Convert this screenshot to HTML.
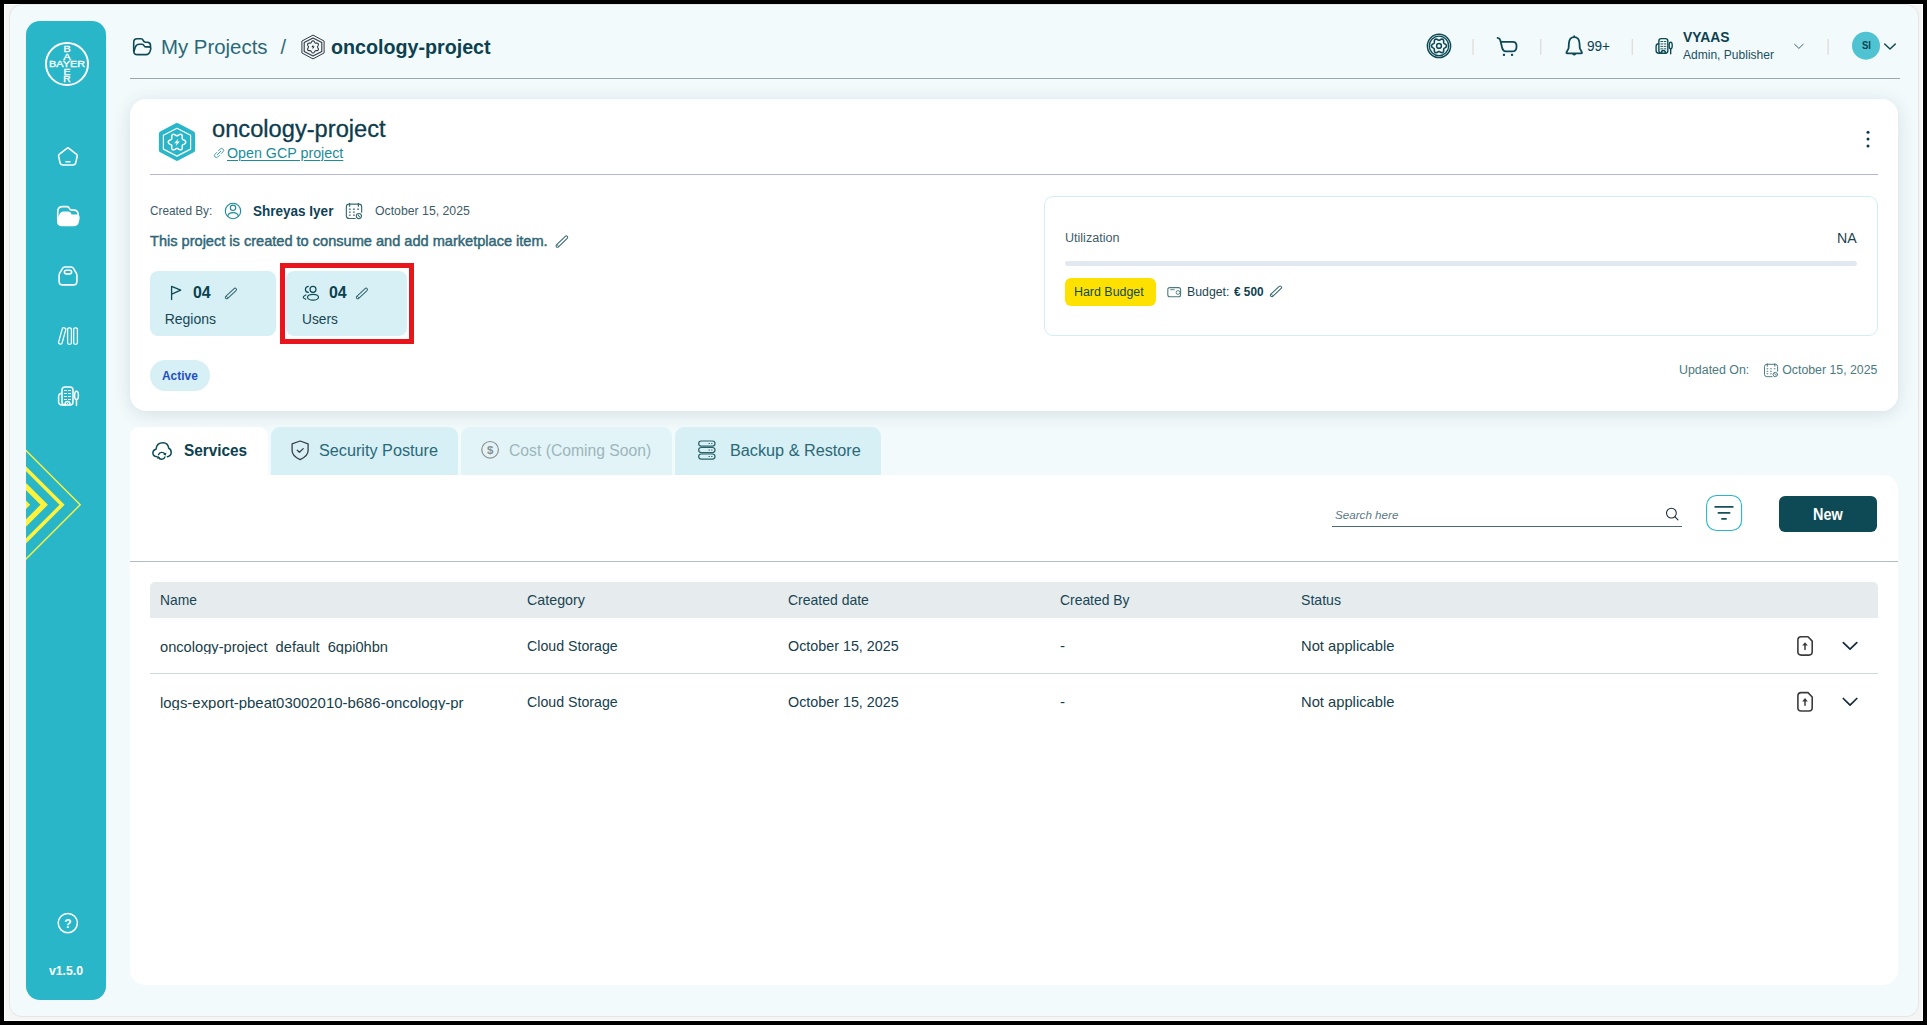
<!DOCTYPE html>
<html lang="en"><head><meta charset="utf-8"><title>oncology-project</title><style>
*{margin:0;padding:0;box-sizing:border-box}
html,body{width:1927px;height:1025px;overflow:hidden;background:#000}
body{position:relative;font-family:"Liberation Sans",sans-serif;}
.b{position:absolute;display:block}
.t{position:absolute;display:block;white-space:nowrap;transform-origin:0 0}
svg{overflow:visible}
</style></head><body>
<div class="b" style="left:4px;top:4px;width:1919px;height:1017px;background:#f5f5f5;border:1px solid #fff;"></div>
<div class="b" style="left:9.6px;top:5.2px;width:1908.2px;height:1011.2px;background:#f2fafc;border-radius:12px;box-shadow:0 0 0 1px #e6e6e6;"></div>
<div class="b" style="left:26px;top:20.5px;width:80px;height:979.5px;background:#29b6c9;border-radius:14px;"></div>
<svg class="b" style="left:0px;top:0px;" width="140" height="110" viewBox="0 0 140 110" fill="none"><circle cx="67" cy="64" r="21" stroke="#fff" stroke-width="2"/><g fill="#fff" font-family="Liberation Sans, sans-serif" font-weight="400" font-size="8.4" text-anchor="middle" stroke="#fff" stroke-width="0.3"><text x="67" y="67.2" textLength="36" lengthAdjust="spacingAndGlyphs">BAYER</text><text x="67" y="52.3" textLength="7.2" lengthAdjust="spacingAndGlyphs">B</text><text x="67" y="60" textLength="7.6" lengthAdjust="spacingAndGlyphs">A</text><text x="67" y="74.6" textLength="7" lengthAdjust="spacingAndGlyphs">E</text><text x="67" y="82.2" textLength="7.4" lengthAdjust="spacingAndGlyphs">R</text></g></svg>
<svg class="b" style="left:0px;top:0px;" width="140" height="420" viewBox="0 0 140 420" fill="none"><g stroke="#fff" stroke-width="1.6" stroke-linejoin="round" stroke-linecap="round"><path d="M66.9,148.3 Q67.9,147.5 68.9,148.3 L76.6,154.3 Q77.4,155 77.2,156.1 L75.8,162.6 Q75.3,165 72.8,165 L63,165 Q60.5,165 60,162.6 L58.6,156.1 Q58.4,155 59.2,154.3 Z"/><path d="M66,161.8 L69.9,161.8"/></g><g stroke="#fff" stroke-width="1.6" stroke-linejoin="round" stroke-linecap="round"><path d="M57.75,219 L57.75,211.6 Q57.75,206.6 62.5,206.6 L66.8,206.6 Q68.6,206.6 69.3,208.3 Q70,210.1 71.8,210.1 L73.8,210.1 Q78.2,210.1 78.2,215"/><path fill="#fff" d="M59.6,216.5 Q60.3,212.4 64,212.4 L68,212.4 Q70.1,212.4 70.5,213.9 Q70.9,215.4 72.5,215.4 L77,215.4 Q79.2,215.4 78.8,218.5 L78.1,222 Q77.3,225.5 73.5,225.5 L62,225.5 Q57.9,225.5 57.8,221.5 L57.75,219 Z"/></g><g stroke="#fff" stroke-width="1.6" stroke-linejoin="round"><path d="M64.8,267 L71.2,267 Q72.7,267 73.5,268.4 L76.4,273.3 Q76.9,274.2 76.9,275.3 L76.9,281.2 Q76.9,284.9 73.2,284.9 L62.8,284.9 Q59.1,284.9 59.1,281.2 L59.1,275.3 Q59.1,274.2 59.6,273.3 L62.5,268.4 Q63.3,267 64.8,267 Z"/><rect x="64.4" y="270.2" width="7.2" height="3.7" rx="1.85"/></g><g stroke="#fff" stroke-width="1.3"><rect x="73.7" y="327.8" width="3.7" height="16.5" rx="1.5"/><rect x="67.6" y="327.8" width="3.8" height="16.5" rx="1.5"/><rect x="60.4" y="327.6" width="3.6" height="16.6" rx="1.3" transform="rotate(15.5 62.2 335.9)"/></g><g stroke="#fff" stroke-width="1.5" stroke-linecap="round" stroke-linejoin="round"><rect x="62" y="387" width="11" height="17.9" rx="3"/><path d="M61.6,393.2 Q58.6,393.5 58.6,396.6 L58.6,401.5 Q58.6,404.9 62,404.9 L66,404.9"/><path d="M65,404.4 Q65,401.6 67.5,401.6 Q70,401.6 70,404.4"/><ellipse cx="76.5" cy="395.4" rx="1.9" ry="4.1"/><path d="M76.5,399.6 L76.5,405.6"/></g><g stroke="#fff" stroke-width="1" stroke-linecap="round"><path d="M64.4,390.5 L66.6,390.5"/><path d="M68.45,390.5 L70.64999999999999,390.5"/><path d="M64.4,393.5 L66.6,393.5"/><path d="M68.45,393.5 L70.64999999999999,393.5"/><path d="M64.4,396.5 L66.6,396.5"/><path d="M68.45,396.5 L70.64999999999999,396.5"/><path d="M64.4,399.5 L66.6,399.5"/><path d="M68.45,399.5 L70.64999999999999,399.5"/></g><circle cx="67.5" cy="403.5" r="0.6" fill="#fff"/></svg>
<svg class="b" style="left:0px;top:0px;" width="140" height="600" viewBox="0 0 140 600" fill="none"><g fill="#fff23a"><path d="M26,449.6 L81.2,504.8 L26,560.0 L26,558.0 L79.2,504.8 L26,451.6 Z"/><path d="M26,466.20000000000005 L64.6,504.8 L26,543.4 L26,538.3 L59.49999999999999,504.8 L26,471.30000000000007 Z"/><path d="M26,482.90000000000003 L47.9,504.8 L26,526.7 L26,519.3000000000001 L40.5,504.8 L26,490.3 Z"/><path d="M26,500.6 L30.2,504.8 L26,509 Z"/></g></svg>
<svg class="b" style="left:0px;top:0px;" width="140" height="1000" viewBox="0 0 140 1000" fill="none"><circle cx="67.8" cy="923.1" r="9.6" stroke="#fff" stroke-width="1.5"/><text x="67.8" y="927.5" fill="#fff" font-family="Liberation Sans, sans-serif" font-size="12" font-weight="700" text-anchor="middle">?</text></svg>
<span class="t" style="left:48.70px;top:965.00px;font-size:12px;line-height:12px;color:#fff;font-weight:700;transform:scaleX(1.0191);">v1.5.0</span>
<svg class="b" style="left:0px;top:0px;" width="200" height="80" viewBox="0 0 200 80" fill="none"><g stroke="#0e4a55" stroke-width="1.6" stroke-linecap="round" stroke-linejoin="round"><path d="M133.7,51.5 L133.7,42.4 Q133.7,38.8 137.2,38.8 L140.9,38.8 Q142.6,38.8 143.2,40.4 Q143.9,42.3 145.6,42.3 L147.3,42.3 Q150.5,42.3 150.5,45.6 L150.5,47"/><path d="M133.9,51.6 L135.3,47.2 Q136.2,44.2 139.2,44.2 L142,44.2 Q143.4,44.2 143.9,45.5 Q144.4,46.9 145.8,46.9 L148.8,46.9 Q151.3,46.9 150.7,49.2 L149.8,52 Q148.9,54.6 146.2,54.6 L137.4,54.6 Q133.8,54.6 133.9,51.6 Z"/></g></svg>
<span class="t" style="left:160.60px;top:37.00px;font-size:20px;line-height:20px;color:#2b6878;transform:scaleX(1.0195);">My Projects</span>
<span class="t" style="left:280.40px;top:37.00px;font-size:20px;line-height:20px;color:#2b6878;">/</span>
<svg class="b" style="left:0px;top:0px;" width="340" height="80" viewBox="0 0 340 80" fill="none"><g stroke="#343843" stroke-width="1" stroke-linejoin="round"><path d="M313.00,35.10 L324.10,41.05 L324.10,52.95 L313.00,58.90 L301.90,52.95 L301.90,41.05 Z"/><path d="M313.00,38.05 L321.80,42.52 L321.80,51.48 L313.00,55.95 L304.20,51.48 L304.20,42.52 Z" stroke-width="1.1"/><path d="M313.00,40.80 L313.39,40.87 L313.77,41.08 L314.09,41.40 L314.37,41.78 L314.61,42.17 L314.81,42.53 L315.02,42.81 L315.25,43.00 L315.53,43.11 L315.88,43.14 L316.29,43.15 L316.75,43.15 L317.21,43.20 L317.65,43.33 L318.02,43.54 L318.28,43.85 L318.42,44.23 L318.42,44.66 L318.31,45.10 L318.12,45.53 L317.90,45.93 L317.69,46.28 L317.55,46.60 L317.50,46.90 L317.55,47.20 L317.69,47.52 L317.90,47.87 L318.12,48.27 L318.31,48.70 L318.42,49.14 L318.42,49.57 L318.28,49.95 L318.02,50.26 L317.65,50.47 L317.21,50.60 L316.75,50.65 L316.29,50.65 L315.88,50.66 L315.53,50.69 L315.25,50.80 L315.02,50.99 L314.81,51.27 L314.61,51.63 L314.37,52.02 L314.09,52.40 L313.77,52.72 L313.39,52.93 L313.00,53.00 L312.61,52.93 L312.23,52.72 L311.91,52.40 L311.63,52.02 L311.39,51.63 L311.19,51.27 L310.98,50.99 L310.75,50.80 L310.47,50.69 L310.12,50.66 L309.71,50.65 L309.25,50.65 L308.79,50.60 L308.35,50.47 L307.98,50.26 L307.72,49.95 L307.58,49.57 L307.58,49.14 L307.69,48.70 L307.88,48.27 L308.10,47.87 L308.31,47.52 L308.45,47.20 L308.50,46.90 L308.45,46.60 L308.31,46.28 L308.10,45.93 L307.88,45.53 L307.69,45.10 L307.58,44.66 L307.58,44.23 L307.72,43.85 L307.98,43.54 L308.35,43.33 L308.79,43.20 L309.25,43.15 L309.71,43.15 L310.12,43.14 L310.47,43.11 L310.75,43.00 L310.98,42.81 L311.19,42.53 L311.39,42.17 L311.63,41.78 L311.91,41.40 L312.23,41.08 L312.61,40.87 Z" stroke-width="1.1"/></g><path d="M313.4,44.6 L311.4,47.3 L312.9,47.3 L312.5,49.4 L314.6,46.5 L313.1,46.5 Z" fill="#15171c"/></svg>
<span class="t" style="left:330.90px;top:37.00px;font-size:20px;line-height:20px;color:#0c4150;font-weight:700;transform:scaleX(0.9838);">oncology-project</span>
<div class="b" style="left:130px;top:78px;width:1770px;height:1px;background:#9ba7ab;"></div>
<svg class="b" style="left:0px;top:0px;" width="1927" height="80" viewBox="0 0 1927 80" fill="none"><g stroke="#0e4a55"><circle cx="1439" cy="45.9" r="11.6" stroke-width="1.5"/><circle cx="1439" cy="45.9" r="9.7" stroke-width="1.3"/><path d="M1439.00,40.30 L1439.37,40.24 L1439.77,40.06 L1440.21,39.80 L1440.71,39.52 L1441.24,39.29 L1441.80,39.15 L1442.33,39.15 L1442.80,39.32 L1443.18,39.64 L1443.45,40.10 L1443.60,40.65 L1443.67,41.23 L1443.67,41.80 L1443.68,42.31 L1443.72,42.75 L1443.85,43.10 L1444.09,43.39 L1444.44,43.64 L1444.89,43.90 L1445.38,44.19 L1445.85,44.54 L1446.24,44.95 L1446.51,45.41 L1446.60,45.90 L1446.51,46.39 L1446.24,46.85 L1445.85,47.26 L1445.38,47.61 L1444.89,47.90 L1444.44,48.16 L1444.09,48.41 L1443.85,48.70 L1443.72,49.05 L1443.68,49.49 L1443.67,50.00 L1443.67,50.57 L1443.60,51.15 L1443.45,51.70 L1443.18,52.16 L1442.80,52.48 L1442.33,52.65 L1441.80,52.65 L1441.24,52.51 L1440.71,52.28 L1440.21,52.00 L1439.77,51.74 L1439.37,51.56 L1439.00,51.50 L1438.63,51.56 L1438.23,51.74 L1437.79,52.00 L1437.29,52.28 L1436.76,52.51 L1436.20,52.65 L1435.67,52.65 L1435.20,52.48 L1434.82,52.16 L1434.55,51.70 L1434.40,51.15 L1434.33,50.57 L1434.33,50.00 L1434.32,49.49 L1434.28,49.05 L1434.15,48.70 L1433.91,48.41 L1433.56,48.16 L1433.11,47.90 L1432.62,47.61 L1432.15,47.26 L1431.76,46.85 L1431.49,46.39 L1431.40,45.90 L1431.49,45.41 L1431.76,44.95 L1432.15,44.54 L1432.62,44.19 L1433.11,43.90 L1433.56,43.64 L1433.91,43.39 L1434.15,43.10 L1434.28,42.75 L1434.32,42.31 L1434.33,41.80 L1434.33,41.23 L1434.40,40.65 L1434.55,40.10 L1434.82,39.64 L1435.20,39.32 L1435.67,39.15 L1436.20,39.15 L1436.76,39.29 L1437.29,39.52 L1437.79,39.80 L1438.23,40.06 L1438.63,40.24 Z" stroke-width="1.6" stroke-linejoin="round"/><circle cx="1439" cy="45.9" r="2.4" stroke-width="1.5"/></g><rect x="1472.3" y="39" width="1.4" height="15.8" fill="#e3dcdc"/><rect x="1540" y="39" width="1.4" height="15.8" fill="#e3dcdc"/><rect x="1631.6" y="39" width="1.4" height="15.8" fill="#e3dcdc"/><rect x="1827.4" y="39" width="1.4" height="15.8" fill="#e3dcdc"/><g stroke="#0e4a55" stroke-width="1.8" stroke-linecap="round" stroke-linejoin="round"><path d="M1497.6,37.9 Q1499.8,38.2 1500.3,40.2 L1502.2,48 Q1503,51.4 1506,51.4 L1512,51.4 Q1516.5,51.4 1516.5,46.9 L1516.5,45.6 Q1516.5,41.8 1512.8,41.8 L1500.9,41.8"/></g><rect x="1502.9" y="53.8" width="2.1" height="2.1" fill="#0e4a55"/><rect x="1511" y="53.8" width="2.1" height="2.1" fill="#0e4a55"/><g stroke="#0e4a55" stroke-width="1.8" stroke-linejoin="round" stroke-linecap="round"><path d="M1567.2,53.4 Q1566,53.4 1566.6,52.2 L1568.3,48.9 Q1568.7,48 1568.7,47 L1568.9,43.3 Q1569.3,37.2 1574.2,37.2 Q1579.1,37.2 1579.5,43.3 L1579.7,47 Q1579.7,48 1580.1,48.9 L1581.8,52.2 Q1582.4,53.4 1581.2,53.4 Z"/><path d="M1574.2,36.2 L1574.2,37"/></g><path d="M1572,54 Q1574.2,57 1576.4,54 Z" fill="#0e4a55"/><g transform="translate(1655.2,38) scale(0.815) translate(-57.5,-386.2)"><g stroke="#0e4a55" stroke-width="1.7" stroke-linecap="round" stroke-linejoin="round"><rect x="62" y="387" width="11" height="17.9" rx="3"/><path d="M61.6,393.2 Q58.6,393.5 58.6,396.6 L58.6,401.5 Q58.6,404.9 62,404.9 L66,404.9"/><path d="M65,404.4 Q65,401.6 67.5,401.6 Q70,401.6 70,404.4"/><ellipse cx="76.5" cy="395.4" rx="1.9" ry="4.1"/><path d="M76.5,399.6 L76.5,405.6"/></g><g stroke="#0e4a55" stroke-width="1.1" stroke-linecap="round"><path d="M64.4,390.5 L66.6,390.5"/><path d="M68.45,390.5 L70.64999999999999,390.5"/><path d="M64.4,393.5 L66.6,393.5"/><path d="M68.45,393.5 L70.64999999999999,393.5"/><path d="M64.4,396.5 L66.6,396.5"/><path d="M68.45,396.5 L70.64999999999999,396.5"/><path d="M64.4,399.5 L66.6,399.5"/><path d="M68.45,399.5 L70.64999999999999,399.5"/></g></g><g stroke="#0e4a55" stroke-linecap="round" stroke-linejoin="round"><path d="M1794.6,44.3 L1798.9,48.4 L1803.2,44.3" stroke-width="1" stroke="#3a6a72"/><path d="M1884.7,44 L1890,49 L1895.3,44" stroke-width="1.5"/></g><circle cx="1866" cy="45.7" r="14" fill="#50c3d3"/></svg>
<span class="t" style="left:1586.90px;top:39.00px;font-size:14px;line-height:14px;color:#0c4150;transform:scaleX(0.9685);">99+</span>
<span class="t" style="left:1682.50px;top:30.00px;font-size:14px;line-height:14px;color:#0c4150;font-weight:700;transform:scaleX(0.9904);">VYAAS</span>
<span class="t" style="left:1682.60px;top:48.75px;font-size:12.5px;line-height:12.5px;color:#1d4f5e;transform:scaleX(0.9631);">Admin, Publisher</span>
<span class="t" style="left:1861.50px;top:40.50px;font-size:10px;line-height:10px;color:#0c4150;font-weight:700;transform:scaleX(0.9526);">SI</span>
<div class="b" style="left:130px;top:99px;width:1768px;height:312px;background:#fff;border-radius:16px;box-shadow:0 3px 18px rgba(40,60,70,0.14);"></div>
<svg class="b" style="left:0px;top:0px;" width="1927" height="420" viewBox="0 0 1927 420" fill="none"><path d="M177.00,125.40 L192.60,133.65 L192.60,150.15 L177.00,158.40 L161.40,150.15 L161.40,133.65 Z" fill="#29b6c9" stroke="#29b6c9" stroke-width="5" stroke-linejoin="round"/><path d="M177.00,128.30 L190.60,135.25 L190.60,149.15 L177.00,156.10 L163.40,149.15 L163.40,135.25 Z" stroke="#fff" stroke-width="1.2" stroke-linejoin="round"/><path d="M177.00,135.85 L177.41,135.77 L177.86,135.54 L178.37,135.21 L178.94,134.86 L179.56,134.55 L180.21,134.35 L180.83,134.34 L181.38,134.52 L181.81,134.90 L182.10,135.45 L182.26,136.10 L182.30,136.80 L182.28,137.47 L182.25,138.07 L182.28,138.57 L182.41,138.97 L182.69,139.29 L183.11,139.57 L183.65,139.84 L184.24,140.16 L184.83,140.54 L185.31,141.01 L185.64,141.53 L185.75,142.10 L185.64,142.67 L185.31,143.19 L184.83,143.66 L184.24,144.04 L183.65,144.36 L183.11,144.63 L182.69,144.91 L182.41,145.22 L182.28,145.63 L182.25,146.13 L182.28,146.73 L182.30,147.40 L182.26,148.10 L182.10,148.75 L181.81,149.30 L181.38,149.68 L180.83,149.86 L180.21,149.85 L179.56,149.65 L178.94,149.34 L178.37,148.99 L177.86,148.66 L177.41,148.43 L177.00,148.35 L176.59,148.43 L176.14,148.66 L175.63,148.99 L175.06,149.34 L174.44,149.65 L173.79,149.85 L173.17,149.86 L172.62,149.68 L172.19,149.30 L171.90,148.75 L171.74,148.10 L171.70,147.40 L171.72,146.73 L171.75,146.13 L171.72,145.63 L171.59,145.22 L171.31,144.91 L170.89,144.63 L170.35,144.36 L169.76,144.04 L169.17,143.66 L168.69,143.19 L168.36,142.67 L168.25,142.10 L168.36,141.53 L168.69,141.01 L169.17,140.54 L169.76,140.16 L170.35,139.84 L170.89,139.57 L171.31,139.29 L171.59,138.97 L171.72,138.57 L171.75,138.07 L171.72,137.47 L171.70,136.80 L171.74,136.10 L171.90,135.45 L172.19,134.90 L172.62,134.52 L173.17,134.34 L173.79,134.35 L174.44,134.55 L175.06,134.86 L175.63,135.21 L176.14,135.54 L176.59,135.77 Z" stroke="#fff" stroke-width="1.5" stroke-linejoin="round"/><path d="M178.4,138.5 L174.2,143.2 L176.8,143.2 L175.6,146.3 L179.8,141.4 L177.2,141.4 Z" fill="#fff"/><g transform="translate(219,153) rotate(-45)" stroke="#1b8c99" stroke-width="0.9" stroke-linecap="round" opacity="0.85"><path d="M-1.2,-2 L-3.6,-2 Q-5.6,-2 -5.6,0 Q-5.6,2 -3.6,2 L-1.2,2"/><path d="M1.2,-2 L3.6,-2 Q5.6,-2 5.6,0 Q5.6,2 3.6,2 L1.2,2"/><path d="M-2.4,0 L2.4,0"/></g><circle cx="1868" cy="132.2" r="1.5" fill="#0c3a4a"/><circle cx="1868" cy="139" r="1.5" fill="#0c3a4a"/><circle cx="1868" cy="145.9" r="1.5" fill="#0c3a4a"/><g stroke="#1b8c99" stroke-width="1.1"><circle cx="233" cy="211" r="7.7"/><circle cx="233" cy="207.8" r="2.7"/><path d="M227.6,216.3 Q228.4,212.6 233,212.6 Q237.6,212.6 238.4,216.3"/></g><g transform="translate(345.8,203.3) scale(1.0)" stroke="#3a6a72" stroke-width="1.15" stroke-linecap="round"><path d="M9.4,15.2 L3.3,15.2 Q0.55,15.2 0.55,12.5 L0.55,3.5 Q0.55,0.8 3.3,0.8 L13.1,0.8 Q15.85,0.8 15.85,3.5 L15.85,8.9"/><path d="M3.8,0.2 L3.8,2.9 M12.6,0.2 L12.6,2.9" stroke-width="1.3"/><circle cx="13.1" cy="12.7" r="2.55"/><path d="M12.6,11.7 L12.9,12.9 L13.9,13.4" stroke-width="1"/><path d="M3.55,5.9 L4.45,5.9" stroke-width="1.25"/><path d="M7.6499999999999995,5.9 L8.549999999999999,5.9" stroke-width="1.25"/><path d="M11.850000000000001,5.9 L12.75,5.9" stroke-width="1.25"/><path d="M3.55,8.8 L4.45,8.8" stroke-width="1.25"/><path d="M3.55,11.8 L4.45,11.8" stroke-width="1.25"/><path d="M7.6499999999999995,8.8 L8.549999999999999,8.8" stroke-width="1.25"/><path d="M7.6499999999999995,11.8 L8.549999999999999,11.8" stroke-width="1.25"/></g><g transform="translate(1764,363.6) scale(0.86)" stroke="#4b7a80" stroke-width="1.15" stroke-linecap="round"><path d="M9.4,15.2 L3.3,15.2 Q0.55,15.2 0.55,12.5 L0.55,3.5 Q0.55,0.8 3.3,0.8 L13.1,0.8 Q15.85,0.8 15.85,3.5 L15.85,8.9"/><path d="M3.8,0.2 L3.8,2.9 M12.6,0.2 L12.6,2.9" stroke-width="1.3"/><circle cx="13.1" cy="12.7" r="2.55"/><path d="M12.6,11.7 L12.9,12.9 L13.9,13.4" stroke-width="1"/><path d="M3.55,5.9 L4.45,5.9" stroke-width="1.25"/><path d="M7.6499999999999995,5.9 L8.549999999999999,5.9" stroke-width="1.25"/><path d="M11.850000000000001,5.9 L12.75,5.9" stroke-width="1.25"/><path d="M3.55,8.8 L4.45,8.8" stroke-width="1.25"/><path d="M3.55,11.8 L4.45,11.8" stroke-width="1.25"/><path d="M7.6499999999999995,8.8 L8.549999999999999,8.8" stroke-width="1.25"/><path d="M7.6499999999999995,11.8 L8.549999999999999,11.8" stroke-width="1.25"/></g><g transform="translate(561.85,241.55) rotate(-44.02)"><rect x="-7.53" y="-1.40" width="15.06" height="2.80" rx="1.40" stroke="#33656f" stroke-width="1.0"/><path d="M-5.63,-1.40 L-5.63,1.40" stroke="#33656f" stroke-width="0.8"/></g></svg>
<span class="t" style="left:211.50px;top:117.50px;font-size:23px;line-height:23px;color:#0d3c4d;transform:scaleX(1.0287);-webkit-text-stroke:0.3px #0d3c4d;">oncology-project</span>
<span class="t" style="left:226.90px;top:146.00px;font-size:14px;line-height:14px;color:#1b8c99;transform:scaleX(1.0190);text-decoration:underline;text-decoration-thickness:1px;text-underline-offset:2px;">Open GCP project</span>
<div class="b" style="left:150px;top:174px;width:1728px;height:1px;background:#b4b6dc;"></div>
<span class="t" style="left:150.30px;top:203.75px;font-size:13.5px;line-height:13.5px;color:#3d5c69;transform:scaleX(0.8740);">Created By:</span>
<span class="t" style="left:253.10px;top:203.75px;font-size:14.5px;line-height:14.5px;color:#0e4256;font-weight:700;transform:scaleX(0.9321);">Shreyas Iyer</span>
<span class="t" style="left:374.50px;top:203.80px;font-size:13.4px;line-height:13.4px;color:#3d5c69;transform:scaleX(0.9165);">October 15, 2025</span>
<span class="t" style="left:150.30px;top:233.90px;font-size:14.2px;line-height:14.2px;color:#2f6778;transform:scaleX(1.0270);-webkit-text-stroke:0.45px #2f6778;">This project is created to consume and add marketplace item.</span>
<div class="b" style="left:150px;top:271px;width:126px;height:65px;background:#d6f0f5;border-radius:8px;"></div>
<div class="b" style="left:286.3px;top:271px;width:120.7px;height:65px;background:#d6f0f5;border-radius:8px;"></div>
<div class="b" style="left:279.7px;top:262.8px;width:134px;height:81.2px;border:5.8px solid #e8161c;"></div>
<svg class="b" style="left:0px;top:0px;" width="600" height="420" viewBox="0 0 600 420" fill="none"><g stroke="#0d4a54" stroke-width="1.3" stroke-linejoin="round" stroke-linecap="round"><path d="M171.6,299.6 L171.6,286.4 L180.7,290.2 L171.8,294.1"/></g><g stroke="#0d4a54" stroke-width="1.2" stroke-linecap="round"><circle cx="313" cy="289.3" r="3"/><ellipse cx="313" cy="297.2" rx="5.5" ry="2.9"/><path d="M308.3,286.4 Q305.4,286.9 305.4,289.4 Q305.4,291.9 308.3,292.4"/><path d="M305.8,295 Q303.2,296.4 303.2,297.3 Q303.2,298.3 305.8,299.3"/></g><g transform="translate(230.90,293.45) rotate(-43.19)"><rect x="-7.11" y="-1.40" width="14.22" height="2.80" rx="1.40" stroke="#33656f" stroke-width="1.0"/><path d="M-5.21,-1.40 L-5.21,1.40" stroke="#33656f" stroke-width="0.8"/></g><g transform="translate(361.90,293.45) rotate(-43.19)"><rect x="-7.11" y="-1.40" width="14.22" height="2.80" rx="1.40" stroke="#33656f" stroke-width="1.0"/><path d="M-5.21,-1.40 L-5.21,1.40" stroke="#33656f" stroke-width="0.8"/></g></svg>
<span class="t" style="left:192.80px;top:284.50px;font-size:16px;line-height:16px;color:#0c4150;font-weight:700;transform:scaleX(0.9945);">04</span>
<span class="t" style="left:329.20px;top:284.50px;font-size:16px;line-height:16px;color:#0c4150;font-weight:700;transform:scaleX(0.9945);">04</span>
<span class="t" style="left:164.70px;top:312.00px;font-size:14px;line-height:14px;color:#1b4552;">Regions</span>
<span class="t" style="left:301.50px;top:312.00px;font-size:14px;line-height:14px;color:#1b4552;transform:scaleX(0.9792);">Users</span>
<div class="b" style="left:150px;top:360.2px;width:59.7px;height:30.8px;background:#d6f0f5;border-radius:16px;"></div>
<span class="t" style="left:162.30px;top:369.85px;font-size:12.3px;line-height:12.3px;color:#1f4fbf;font-weight:700;transform:scaleX(0.9697);">Active</span>
<div class="b" style="left:1044px;top:196px;width:834px;height:140px;border:1px solid #d3eef3;border-radius:9px;"></div>
<span class="t" style="left:1064.90px;top:231.75px;font-size:12.5px;line-height:12.5px;color:#3d5c69;transform:scaleX(1.0039);">Utilization</span>
<span class="t" style="left:1836.90px;top:231.00px;font-size:14px;line-height:14px;color:#1b4552;transform:scaleX(1.0129);">NA</span>
<div class="b" style="left:1065px;top:261px;width:792px;height:5px;background:#e2e8f1;border-radius:3px;"></div>
<div class="b" style="left:1065px;top:278.2px;width:91.1px;height:27.9px;background:#ffe100;border-radius:6px;"></div>
<span class="t" style="left:1074.20px;top:285.75px;font-size:12.5px;line-height:12.5px;color:#0f4a50;transform:scaleX(0.9931);">Hard Budget</span>
<svg class="b" style="left:0px;top:0px;" width="1927" height="420" viewBox="0 0 1927 420" fill="none"><g stroke="#4b7a80" stroke-width="1.1" stroke-linejoin="round"><rect x="1167.8" y="287.6" width="12.8" height="9.2" rx="2"/><path d="M1170.3,289.7 L1174.6,289.7" stroke-width="0.9"/><circle cx="1178" cy="292.5" r="1.9" stroke-width="0.9"/></g><g transform="translate(1276.00,291.35) rotate(-43.19)"><rect x="-7.11" y="-1.40" width="14.22" height="2.80" rx="1.40" stroke="#33656f" stroke-width="1.0"/><path d="M-5.21,-1.40 L-5.21,1.40" stroke="#33656f" stroke-width="0.8"/></g></svg>
<span class="t" style="left:1187.40px;top:285.75px;font-size:12.5px;line-height:12.5px;color:#1b4552;transform:scaleX(0.9840);">Budget:</span>
<span class="t" style="left:1233.80px;top:286.00px;font-size:12px;line-height:12px;color:#0c4150;font-weight:700;transform:scaleX(0.9824);">€ 500</span>
<span class="t" style="left:1679.20px;top:363.85px;font-size:12.3px;line-height:12.3px;color:#4b7a80;transform:scaleX(1.0079);">Updated On:</span>
<span class="t" style="left:1782.30px;top:363.85px;font-size:12.3px;line-height:12.3px;color:#4b7a80;">October 15, 2025</span>
<div class="b" style="left:130px;top:427px;width:137.5px;height:49px;background:#fff;border-radius:9px 9px 0 0;"></div>
<div class="b" style="left:271px;top:427px;width:187px;height:48px;background:#d6f0f5;border-radius:9px 9px 0 0;"></div>
<div class="b" style="left:461.2px;top:427px;width:210.5px;height:48px;background:#e3f4f9;border-radius:9px 9px 0 0;"></div>
<div class="b" style="left:675px;top:427px;width:206px;height:48px;background:#d6f0f5;border-radius:9px 9px 0 0;"></div>
<div class="b" style="left:130px;top:475px;width:1768px;height:510px;background:#fff;border-radius:0 15px 15px 15px;"></div>
<svg class="b" style="left:0px;top:0px;" width="900" height="480" viewBox="0 0 900 480" fill="none"><g stroke="#0d4a54" stroke-width="1.5" stroke-linecap="round" stroke-linejoin="round"><path d="M157,456.7 Q152.9,456.4 152.9,453 Q152.9,449.8 156,449.3 Q156.6,442.7 163,442.7 Q168,442.7 168.7,448.2 Q171.2,449.2 171.2,452.6 Q171.2,456 167.4,456.7"/><path d="M158.5,454.7 A3.5,3.5 0 0 1 164.9,454.2" stroke-width="1.4"/><path d="M164.9,456.9 A3.5,3.5 0 0 1 158.5,457.4" stroke-width="1.4"/></g><path d="M166.5,452.6 L165.6,455.7 L163.2,454.2 Z M156.9,459 L157.8,455.9 L160.2,457.4 Z" fill="#0d4a54"/><g stroke="#3b3f48" stroke-width="1.3" stroke-linejoin="round" stroke-linecap="round"><path d="M300.1,441 L308.1,443.9 L308.1,450.6 Q308.1,456.2 300.1,459.6 Q292.1,456.2 292.1,450.6 L292.1,443.9 Z"/><path d="M297.3,450.2 L299.4,452.2 L303.2,448.6"/></g><circle cx="490.1" cy="449.8" r="8.3" stroke="#8d8f90" stroke-width="1.2"/><text x="490.1" y="453.9" fill="#8d8f90" font-family="Liberation Sans, sans-serif" font-size="11.5" font-weight="700" text-anchor="middle">$</text><g stroke="#2a6068" stroke-width="1.2"><rect x="698.7" y="441.0" width="16.3" height="5.1" rx="2.55"/><rect x="698.7" y="447.5" width="16.3" height="5.1" rx="2.55"/><rect x="698.7" y="454.0" width="16.3" height="5.1" rx="2.55"/><path d="M708.6,443.55 L709.8,443.55 M711.2,443.55 L712.4,443.55 M708.6,450.05 L709.8,450.05 M711.2,450.05 L712.4,450.05 M708.6,456.55 L709.8,456.55 M711.2,456.55 L712.4,456.55" stroke-width="1.1"/></g></svg>
<span class="t" style="left:184.20px;top:441.90px;font-size:16.2px;line-height:16.2px;color:#0c4150;font-weight:700;transform:scaleX(0.9481);">Services</span>
<span class="t" style="left:318.80px;top:442.50px;font-size:16px;line-height:16px;color:#2b6878;transform:scaleX(1.0138);">Security Posture</span>
<span class="t" style="left:509.40px;top:442.60px;font-size:15.8px;line-height:15.8px;color:#9cb6ba;transform:scaleX(0.9942);">Cost (Coming Soon)</span>
<span class="t" style="left:729.60px;top:442.50px;font-size:16px;line-height:16px;color:#2b6878;transform:scaleX(1.0143);">Backup &amp; Restore</span>
<div class="b" style="left:1332px;top:526px;width:350px;height:1px;background:#4a6a76;"></div>
<span class="t" style="left:1335.40px;top:510.10px;font-size:11.8px;line-height:11.8px;color:#587883;font-style:italic;transform:scaleX(0.9862);">Search here</span>
<svg class="b" style="left:0px;top:0px;" width="1927" height="540" viewBox="0 0 1927 540" fill="none"><g stroke="#14283c" stroke-width="1.05" stroke-linecap="round"><circle cx="1671.4" cy="513.1" r="4.9"/><path d="M1675,516.8 L1678,519.9"/></g><rect x="1706.6" y="495.5" width="35" height="35" rx="10" stroke="#29b6c9" stroke-width="1.1" fill="#fff"/><g stroke="#18505a" stroke-width="1.4" stroke-linecap="round"><path d="M1715.2,506.9 L1732.8,506.9 M1718.4,512.9 L1729.6,512.9 M1721.9,518.8 L1726.1,518.8" stroke-width="1.7"/></g></svg>
<div class="b" style="left:1779px;top:496px;width:98px;height:36px;background:#0e4a55;border-radius:6px;"></div>
<span class="t" style="left:1812.90px;top:506.50px;font-size:16px;line-height:16px;color:#fff;font-weight:700;transform:scaleX(0.9028);">New</span>
<div class="b" style="left:130px;top:561px;width:1768px;height:1px;background:#b2bcc4;"></div>
<div class="b" style="left:150px;top:582px;width:1728px;height:36px;background:#e6ecee;border-radius:5px 5px 0 0;"></div>
<span class="t" style="left:159.80px;top:592.00px;font-size:15px;line-height:15px;color:#1b4552;transform:scaleX(0.9222);">Name</span>
<span class="t" style="left:526.70px;top:592.00px;font-size:15px;line-height:15px;color:#1b4552;transform:scaleX(0.9513);">Category</span>
<span class="t" style="left:788.40px;top:592.00px;font-size:15px;line-height:15px;color:#1b4552;transform:scaleX(0.9328);">Created date</span>
<span class="t" style="left:1059.90px;top:592.00px;font-size:15px;line-height:15px;color:#1b4552;transform:scaleX(0.9262);">Created By</span>
<span class="t" style="left:1300.60px;top:592.00px;font-size:15px;line-height:15px;color:#1b4552;transform:scaleX(0.9406);">Status</span>
<div class="b" style="left:150px;top:673px;width:1728px;height:1px;background:#cfd9dd;"></div>
<div class="b" style="left:158px;top:630.00px;width:340px;height:23.80px;overflow:hidden;"><span class="t" style="left:2.20px;top:9.00px;font-size:15px;line-height:15px;color:#15404d;transform:scaleX(0.9764);">oncology-project_default_6qpi0hbn</span></div>
<span class="t" style="left:526.70px;top:638.00px;font-size:15px;line-height:15px;color:#15404d;transform:scaleX(0.9458);">Cloud Storage</span>
<span class="t" style="left:788.40px;top:638.00px;font-size:15px;line-height:15px;color:#15404d;transform:scaleX(0.9550);">October 15, 2025</span>
<span class="t" style="left:1059.90px;top:638.00px;font-size:15px;line-height:15px;color:#15404d;">-</span>
<span class="t" style="left:1300.60px;top:638.00px;font-size:15px;line-height:15px;color:#15404d;transform:scaleX(0.9825);">Not applicable</span>
<div class="b" style="left:158px;top:685.90px;width:340px;height:23.80px;overflow:hidden;"><span class="t" style="left:2.20px;top:9.10px;font-size:15px;line-height:15px;color:#15404d;transform:scaleX(0.9947);">logs-export-pbeat03002010-b686-oncology-pr</span></div>
<span class="t" style="left:526.70px;top:694.00px;font-size:15px;line-height:15px;color:#15404d;transform:scaleX(0.9458);">Cloud Storage</span>
<span class="t" style="left:788.40px;top:694.00px;font-size:15px;line-height:15px;color:#15404d;transform:scaleX(0.9550);">October 15, 2025</span>
<span class="t" style="left:1059.90px;top:694.00px;font-size:15px;line-height:15px;color:#15404d;">-</span>
<span class="t" style="left:1300.60px;top:694.00px;font-size:15px;line-height:15px;color:#15404d;transform:scaleX(0.9825);">Not applicable</span>
<svg class="b" style="left:0px;top:0px;" width="1927" height="740" viewBox="0 0 1927 740" fill="none"><g transform="translate(1797.1,635.9)"><path d="M3.3,0.8 L10.9,0.8 L15.1,5.2 L15.1,15.9 Q15.1,19.2 11.8,19.2 L4.1,19.2 Q0.8,19.2 0.8,15.9 L0.8,4.1 Q0.8,0.8 4.1,0.8 Z" stroke="#3c3c3e" stroke-width="1.6" stroke-linejoin="round"/><path d="M7.9,13.5 L7.9,8" stroke="#3c3c3e" stroke-width="1.5" stroke-linecap="round"/><path d="M5.1,9.7 L7.9,6.3 L10.7,9.7 Z" fill="#3c3c3e"/></g><path d="M1843.3,642.6 L1850.05,649.2 L1856.8,642.6" stroke="#14283c" stroke-width="1.7" stroke-linecap="round" stroke-linejoin="round"/><g transform="translate(1797.1,691.8)"><path d="M3.3,0.8 L10.9,0.8 L15.1,5.2 L15.1,15.9 Q15.1,19.2 11.8,19.2 L4.1,19.2 Q0.8,19.2 0.8,15.9 L0.8,4.1 Q0.8,0.8 4.1,0.8 Z" stroke="#3c3c3e" stroke-width="1.6" stroke-linejoin="round"/><path d="M7.9,13.5 L7.9,8" stroke="#3c3c3e" stroke-width="1.5" stroke-linecap="round"/><path d="M5.1,9.7 L7.9,6.3 L10.7,9.7 Z" fill="#3c3c3e"/></g><path d="M1843.3,698.5 L1850.05,705.1 L1856.8,698.5" stroke="#14283c" stroke-width="1.7" stroke-linecap="round" stroke-linejoin="round"/></svg>
</body></html>
